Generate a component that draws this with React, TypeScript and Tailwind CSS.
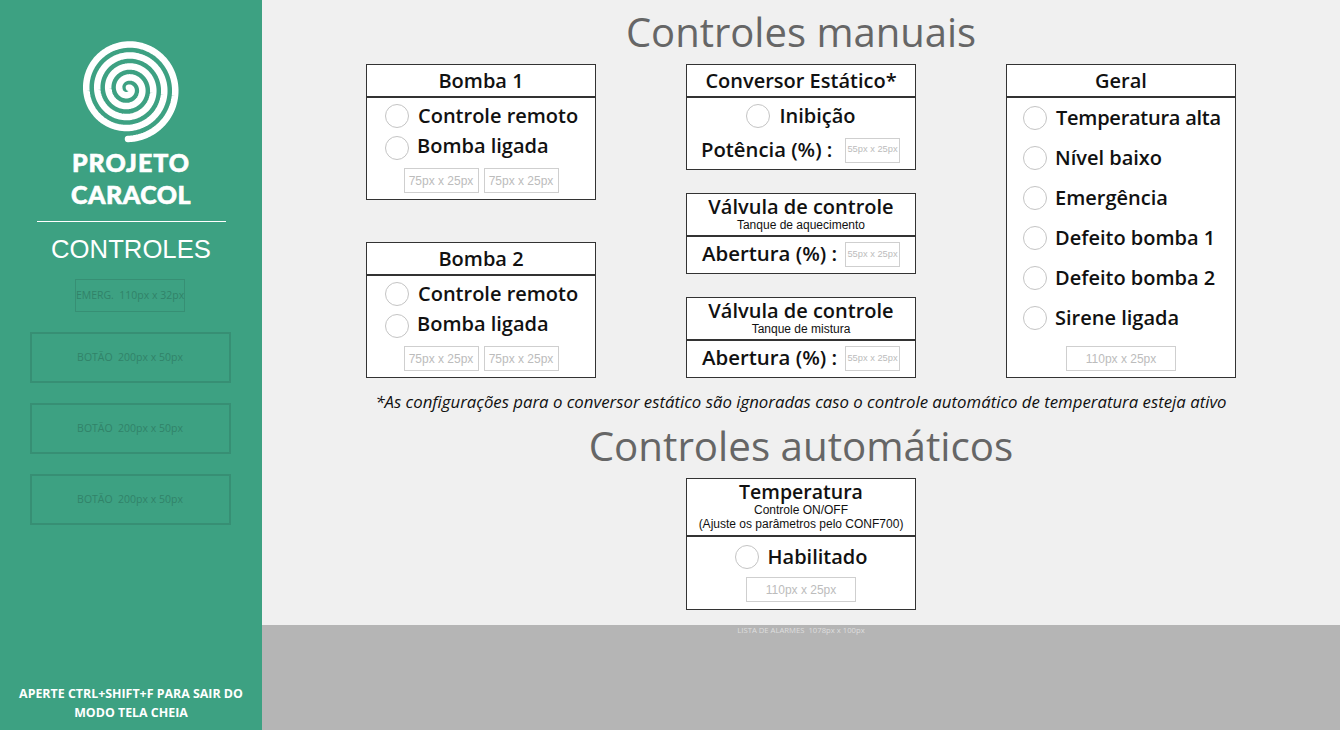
import React from "react";

const SANS = "font-['Open_Sans','Noto_Sans',sans-serif]";
const ARIAL = "font-['Liberation_Sans',Arial,sans-serif]";

function spiralPath() {
  const cx = 50, cy = 52;
  const turns = 4.4;
  const rEnd = 50;
  const rStart = 1.6;
  const pts: string[] = [];
  const endAngle = Math.PI / 2;
  const total = turns * 2 * Math.PI;
  for (let i = 0; i <= 500; i++) {
    const t = i / 500;
    const a = endAngle - total * (1 - t);
    const r = rStart + (rEnd - rStart) * t;
    pts.push(`${(cx + r * Math.cos(a)).toFixed(2)} ${(cy + r * Math.sin(a)).toFixed(2)}`);
  }
  return "M" + pts.join("L");
}

function Logo() {
  return (
    <svg width="106" height="108" viewBox="0 0 106 108" className="block">
      <path d={spiralPath()} fill="none" stroke="white" strokeWidth="6.5" strokeLinecap="round" strokeLinejoin="round" />
    </svg>
  );
}

function Radio({ low }: { low?: boolean }) {
  return <span className={`block w-6 h-6 shrink-0 rounded-full bg-white border border-[#c4c4c4] ${low ? "translate-y-[2px]" : ""}`} />;
}

function Ph({ w, children, small }: { w: string; children: React.ReactNode; small?: boolean }) {
  return (
    <span className={`${w} h-[25px] shrink-0 flex items-center justify-center border border-[#cfcfcf] whitespace-nowrap text-[#bcbcbc] ${ARIAL} ${small ? "text-[9.3px]" : "text-xs"}`}>
      {children}
    </span>
  );
}

function Card({ head, className, children }: { head: React.ReactNode; className?: string; children: React.ReactNode }) {
  return (
    <section className={`w-[230px] bg-white border border-[#333] flex flex-col ${className ?? ""}`}>
      <header className="border-b-2 border-[#333] flex flex-col items-center justify-center">{head}</header>
      {children}
    </section>
  );
}

function Title({ children }: { children: React.ReactNode }) {
  return <h3 className={`${SANS} text-[20px] leading-[31px] font-semibold text-[#111] whitespace-nowrap`}>{children}</h3>;
}

function Row({ label, className, low, gap, tight }: { label: string; className?: string; low?: boolean; gap?: boolean; tight?: boolean }) {
  return (
    <div className={`flex items-center ${gap ? "gap-[8px]" : "gap-[9px]"} ${className ?? ""}`}>
      <Radio low={low} />
      <span className={`${SANS} text-[20px] leading-[30px] font-semibold text-[#111] whitespace-nowrap ${tight ? "tracking-[-0.25px]" : ""}`}>{label}</span>
    </div>
  );
}

function Pump({ name, className }: { name: string; className?: string }) {
  return (
    <Card className={`h-[136px] ${className ?? ""}`} head={<Title>{name}</Title>}>
      <div className="flex flex-col pl-[18px] pt-[3px]">
        <Row label="Controle remoto" />
        <Row label="Bomba ligada" low gap />
      </div>
      <div className="flex justify-center gap-[5px] mt-[7px]">
        <Ph w="w-[75px]">75px x 25px</Ph>
        <Ph w="w-[75px]">75px x 25px</Ph>
      </div>
    </Card>
  );
}

function Valve({ sub }: { sub: string }) {
  return (
    <Card
      className="h-[81px]"
      head={
        <div className="h-[41px] flex flex-col items-center">
          <h3 className={`${SANS} text-[20px] leading-[25px] font-semibold text-[#111] whitespace-nowrap`}>Válvula de controle</h3>
          <p className={`${ARIAL} text-xs leading-[12px] text-[#111]`}>{sub}</p>
        </div>
      }
    >
      <div className="flex-1 flex items-center justify-between pl-[15px] pr-[15px] pb-[1px]">
        <span className={`${SANS} text-[20.4px] font-semibold text-[#111] whitespace-nowrap pb-[2px]`}>Abertura (%) :</span>
        <Ph w="w-[55px]" small>55px x 25px</Ph>
      </div>
    </Card>
  );
}

function SideBtn({ children }: { children: React.ReactNode }) {
  return (
    <div className={`w-[201px] h-[51px] border-2 border-[#378f74] flex items-center justify-center text-[10.5px] text-[#318369] whitespace-nowrap ${SANS}`}>
      {children}
    </div>
  );
}

export default function App() {
  return (
    <div className="flex w-[1340px] h-[730px] overflow-hidden bg-[#f0f0f0]">
      <aside className="w-[262px] h-full bg-[#3da182] flex flex-col items-center shrink-0">
        <div className="mt-[37px]"><Logo /></div>
        <div className="mt-[1px] text-center text-white font-black text-[25px] leading-[32px] tracking-[1px] font-['Lato',sans-serif] [-webkit-text-stroke:0.6px_white]">
          PROJETO<br /><span className="tracking-[0.5px]">CARACOL</span>
        </div>
        <div className="w-[189px] h-px bg-white mt-[11px]" />
        <h2 className={`${ARIAL} text-white text-[25.7px] leading-[31px] mt-[12px]`}>CONTROLES</h2>
        <div className={`mt-[14px] mr-[2px] w-[110px] h-[33px] border border-[#378f74] flex items-center justify-center text-[10.5px] text-[#318369] whitespace-nowrap ${SANS}`}>
          EMERG.&nbsp; 110px x 32px
        </div>
        <div className="mt-5 mr-[2px] flex flex-col gap-5">
          <SideBtn>BOTÃO&nbsp; 200px x 50px</SideBtn>
          <SideBtn>BOTÃO&nbsp; 200px x 50px</SideBtn>
          <SideBtn>BOTÃO&nbsp; 200px x 50px</SideBtn>
        </div>
        <p className={`mt-auto mb-[8px] w-[240px] text-center text-white text-[12.4px] leading-[19px] font-bold ${SANS}`}>
          APERTE CTRL+SHIFT+F PARA SAIR DO MODO TELA CHEIA
        </p>
      </aside>

      <main className="flex-1 flex flex-col">
        <div className="h-[625px] flex flex-col items-center">
          <h1 className={`${SANS} text-[40px] leading-[54px] mt-[5px] text-[#666]`}>Controles manuais</h1>
          <div className="mt-[5px] flex gap-[90px] h-[314px]">
            <div className="flex flex-col justify-between">
              <Pump name="Bomba 1" />
              <Pump name="Bomba 2" />
            </div>
            <div className="flex flex-col justify-between">
              <Card className="h-[106px]" head={<Title>Conversor Estático*</Title>}>
                <div className="flex justify-center pt-[3px]">
                  <Row label="Inibição" />
                </div>
                <div className="flex-1 flex items-center justify-between pl-[14px] pr-[15px]">
                  <span className={`${SANS} text-[20.3px] font-semibold text-[#111] whitespace-nowrap pb-[2px]`}>Potência (%) :</span>
                  <Ph w="w-[55px]" small>55px x 25px</Ph>
                </div>
              </Card>
              <Valve sub="Tanque de aquecimento" />
              <Valve sub="Tanque de mistura" />
            </div>
            <Card head={<Title>Geral</Title>}>
              <div className="flex flex-col gap-[10px] pl-[16px] pt-[5px]">
                {["Temperatura alta", "Nível baixo", "Emergência", "Defeito bomba 1", "Defeito bomba 2", "Sirene ligada"].map((l, i) => (
                  <Row key={l} label={l} gap={i > 0} tight={i === 0} />
                ))}
              </div>
              <div className="flex justify-center mt-[13px]">
                <Ph w="w-[110px]">110px x 25px</Ph>
              </div>
            </Card>
          </div>
          <p className={`${SANS} italic text-[16.8px] leading-[24px] mt-[12px] text-[#111] whitespace-nowrap`}>
            *As configurações para o conversor estático são ignoradas caso o controle automático de temperatura esteja ativo
          </p>
          <h1 className={`${SANS} text-[40.3px] leading-[54px] mt-[5px] text-[#666]`}>Controles automáticos</h1>
          <Card
            className="h-[132px] mt-[5px]"
            head={
              <div className="h-[56px] pt-[2px] flex flex-col items-center">
                <h3 className={`${SANS} text-[19.5px] leading-[22px] font-semibold text-[#111]`}>Temperatura</h3>
                <p className={`${ARIAL} text-xs leading-[14px] text-[#111] whitespace-nowrap text-center`}>
                  Controle ON/OFF<br />(Ajuste os parâmetros pelo CONF700)
                </p>
              </div>
            }
          >
            <div className="flex justify-center pt-[5px]">
              <Row label="Habilitado" />
            </div>
            <div className="flex justify-center mt-[5px]">
              <Ph w="w-[110px]">110px x 25px</Ph>
            </div>
          </Card>
        </div>
        <div className="flex-1 bg-[#b5b5b5] flex justify-center">
          <span className={`${SANS} text-[7.7px] leading-[10px] text-[#dedede] whitespace-nowrap`}>LISTA DE ALARMES&nbsp; 1078px x 100px</span>
        </div>
      </main>
    </div>
  );
}
